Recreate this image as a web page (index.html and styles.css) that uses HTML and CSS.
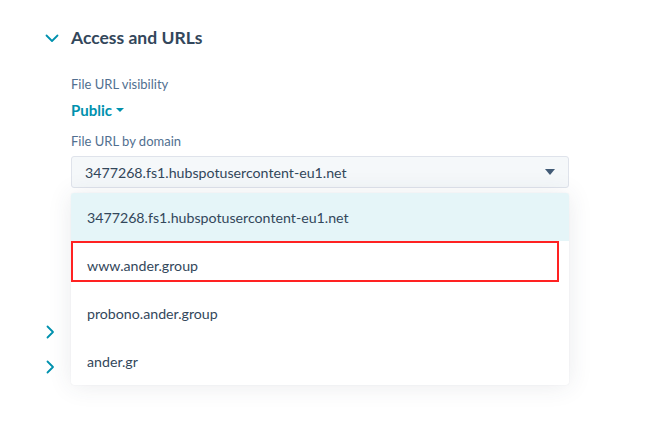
FILE: index.html
```html
<!DOCTYPE html>
<html lang="en">
<head>
<meta charset="utf-8">
<title>Access and URLs</title>
<link rel="stylesheet" href="styles.css">
</head>
<body>
<div class="page">
  <section class="section">
    <div class="section-header">
      <svg class="chev-down" width="14" height="9" viewBox="0 0 14 9"><path d="M1.5 1.5 L7 7 L12.5 1.5" fill="none" stroke="#0091ae" stroke-width="1.8" stroke-linecap="round" stroke-linejoin="round"/></svg>
      <h2 class="section-title">Access and URLs</h2>
    </div>
    <div class="section-body">
      <div class="label">File URL visibility</div>
      <div class="link-dropdown">Public <span class="caret-small"></span></div>
      <div class="label label-domain">File URL by domain</div>
      <div class="select-wrap">
        <div class="select">
          <span>3477268.fs1.hubspotusercontent-eu1.net</span>
          <span class="caret"></span>
        </div>
        <ul class="menu">
          <li class="item active">3477268.fs1.hubspotusercontent-eu1.net</li>
          <li class="item">www.ander.group<span class="highlight-box"></span></li>
          <li class="item">probono.ander.group</li>
          <li class="item">ander.gr</li>
        </ul>
      </div>
    </div>
  </section>
  <div class="collapsed first">
    <svg width="9" height="14" viewBox="0 0 9 14"><path d="M1.5 1.5 L7 7 L1.5 12.5" fill="none" stroke="#0091ae" stroke-width="1.8" stroke-linecap="round" stroke-linejoin="round"/></svg>
  </div>
  <div class="collapsed">
    <svg width="9" height="14" viewBox="0 0 9 14"><path d="M1.5 1.5 L7 7 L1.5 12.5" fill="none" stroke="#0091ae" stroke-width="1.8" stroke-linecap="round" stroke-linejoin="round"/></svg>
  </div>
</div>
</body>
</html>
```
FILE: styles.css
```css
* { box-sizing: border-box; }
html, body { margin: 0; padding: 0; background: #ffffff; }
body {
  font-family: Lato, "Open Sans", sans-serif;
  color: #33475b;
  width: 647px;
  height: 425px;
  overflow: hidden;
}
.page { padding: 26px 0 0 0; }
.section-header {
  display: flex;
  align-items: center;
  height: 24px;
  padding-left: 45px;
  gap: 12px;
}
.section-title {
  margin: 0;
  font-size: 17.5px;
  font-weight: 700;
  color: #33475b;
  line-height: 24px;
}
.section-body { padding-left: 71px; padding-top: 24px; width: 569px; }
.label {
  font-size: 13px;
  line-height: 20px;
  color: #516f90;
}
.link-dropdown {
  margin-top: 4px;
  font-size: 15px;
  font-weight: 700;
  color: #0091ae;
  line-height: 24px;
  display: flex;
  align-items: center;
  gap: 4px;
}
.caret-small {
  width: 0; height: 0;
  border-left: 4px solid transparent;
  border-right: 4px solid transparent;
  border-top: 4px solid #0091ae;
}
.label-domain { margin-top: 9px; }
.select-wrap { position: relative; margin-top: 5px; }
.select {
  height: 32px;
  background: #f5f8fa;
  border: 1px solid #dfe3eb;
  border-radius: 3px;
  display: flex;
  align-items: center;
  justify-content: space-between;
  padding: 0 13px 0 13px;
  font-size: 14.2px;
  color: #33475b;
}
.caret {
  width: 0; height: 0;
  border-left: 5.5px solid transparent;
  border-right: 5.5px solid transparent;
  border-top: 6px solid #425b76;
}
.menu {
  position: absolute;
  top: 37px;
  left: 0;
  right: 0;
  margin: 0;
  padding: 0;
  list-style: none;
  background: #fff;
  border-radius: 3px;
  box-shadow: 0 1px 24px rgba(45, 62, 80, 0.1), 0 0 1px rgba(45,62,80,0.12);
  overflow: visible;
}
.item {
  position: relative;
  height: 48px;
  display: flex;
  align-items: center;
  padding-left: 16px;
  font-size: 14.2px;
  color: #33475b;
}
.item.active { background: #e5f5f8; border-radius: 3px 3px 0 0; }
.highlight-box {
  position: absolute;
  left: 0;
  top: 0;
  width: 488px;
  height: 41px;
  border: 2px solid #f22;
}
.collapsed {
  height: 35px;
  display: flex;
  align-items: center;
  padding-left: 46px;
}
.collapsed.first { margin-top: 126px; }
```
